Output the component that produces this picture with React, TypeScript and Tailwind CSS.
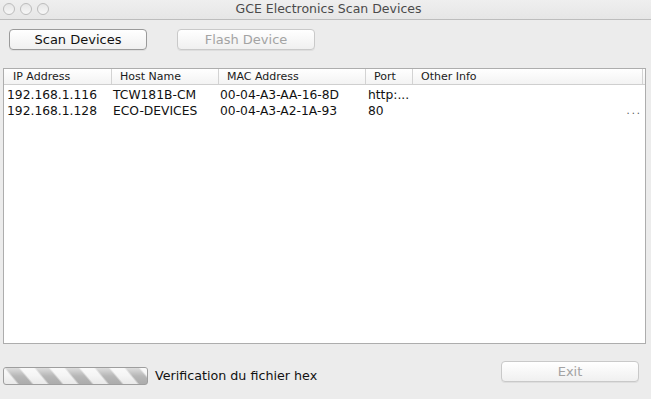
import React from "react";

const rows = [
  { ip: "192.168.1.116", host: "TCW181B-CM", mac: "00-04-A3-AA-16-8D", port: "http:...", info: "" },
  { ip: "192.168.1.128", host: "ECO-DEVICES", mac: "00-04-A3-A2-1A-93", port: "80", info: "..." },
];

function TrafficLight() {
  return (
    <span className="block h-[12px] w-[12px] rounded-full border border-[#bcbcbc] bg-gradient-to-b from-[#e6e6e6] to-[#f7f7f7]" />
  );
}

function MacButton({
  label,
  disabled,
  className = "",
}: {
  label: string;
  disabled?: boolean;
  className?: string;
}) {
  return (
    <button
      type="button"
      className={`flex h-[21px] w-[138px] items-center justify-center rounded-[4px] border bg-gradient-to-b from-[#ffffff] to-[#f0f0f0] text-[13px] leading-none shadow-[0_1px_0_rgba(0,0,0,0.06)] ${
        disabled
          ? "border-[#c9c9c9] text-[#a3a3a3]"
          : "border-[#9a9a9a] text-[#111]"
      } ${className}`}
    >
      {label}
    </button>
  );
}

function HeaderCell({ label, width, first }: { label: string; width?: string; first?: boolean }) {
  return (
    <div
      className={`flex h-full items-center pl-[8px] ${width ?? "flex-1"} ${
        first ? "pl-[9px]" : "border-l border-[#d3d3d3]"
      }`}
    >
      {label}
    </div>
  );
}

export default function App() {
  return (
    <div
      className="flex h-[399px] w-[651px] flex-col overflow-hidden bg-[#ececec] text-[#111]"
      style={{ fontFamily: '"DejaVu Sans", "Liberation Sans", sans-serif' }}
    >
      {/* title bar */}
      <div className="relative flex h-[20px] shrink-0 items-center border-b border-[#bdbdbd] bg-gradient-to-b from-[#efefef] to-[#e6e6e6]">
        <div className="absolute left-[3px] top-[3px] flex gap-[5px]">
          <TrafficLight />
          <TrafficLight />
          <TrafficLight />
        </div>
        <div className="w-full pl-[6px] text-center text-[12.5px] leading-none text-[#4a4a4a]">
          GCE Electronics Scan Devices
        </div>
      </div>

      {/* toolbar */}
      <div className="flex gap-[30px] pl-[9px] pt-[9px]">
        <MacButton label="Scan Devices" />
        <MacButton label="Flash Device" disabled />
      </div>

      {/* table */}
      <div className="ml-[3px] mt-[18px] flex h-[276px] w-[643px] flex-col border border-[#adadad] bg-white">
        <div className="flex h-[16px] shrink-0 items-center border-b border-[#cfcfcf] bg-gradient-to-b from-[#ffffff] to-[#f3f3f3] pr-[2px] text-[11px] leading-none text-[#1a1a1a]">
          <HeaderCell label="IP Address" width="w-[107px]" first />
          <HeaderCell label="Host Name" width="w-[107px]" />
          <HeaderCell label="MAC Address" width="w-[147px]" />
          <HeaderCell label="Port" width="w-[47px]" />
          <div className="flex h-full flex-1 items-center border-l border-r border-[#d3d3d3] pl-[8px]">
            Other Info
          </div>
        </div>
        <div className="flex flex-col pt-[2px] text-[12.3px] leading-none">
          {rows.map((r) => (
            <div key={r.ip} className="flex h-[16px] items-center">
              <div className="w-[107px] pl-[3px]">{r.ip}</div>
              <div className="w-[107px] pl-[2px]">{r.host}</div>
              <div className="w-[147px] pl-[2px]">{r.mac}</div>
              <div className="w-[47px] pl-[3px]">{r.port}</div>
              <div className="flex-1 pr-[3px] text-right text-[10px] tracking-[2px] text-[#555]">{r.info}</div>
            </div>
          ))}
        </div>
      </div>

      {/* bottom bar */}
      <div className="flex items-start pt-[17px]">
        <div className="ml-[3px] mt-[6px] flex items-center">
          <div className="relative h-[18px] w-[145px] overflow-hidden rounded-[3px] border border-[#9e9e9e] bg-[repeating-linear-gradient(50deg,#f4f4f4_0px,#f4f4f4_10px,#b4b4b4_12px,#b4b4b4_21px,#f4f4f4_23px)]">
            <div className="absolute inset-0 bg-gradient-to-b from-[rgba(255,255,255,0.55)] via-[rgba(255,255,255,0.05)] to-[rgba(0,0,0,0.04)]" />
          </div>
          <span className="ml-[7px] text-[12.7px] leading-none">Verification du fichier hex</span>
        </div>
        <MacButton label="Exit" disabled className="ml-auto mr-[12px] w-[137px] text-[#8a8a8a]" />
      </div>
    </div>
  );
}
